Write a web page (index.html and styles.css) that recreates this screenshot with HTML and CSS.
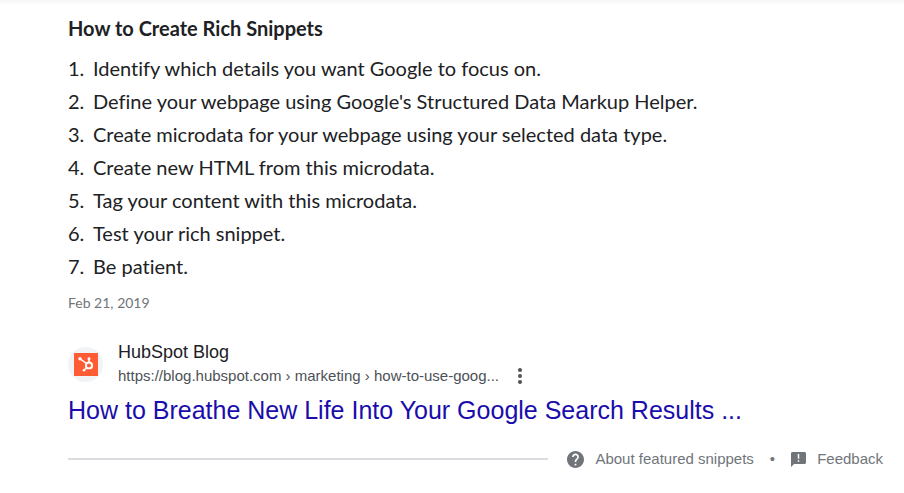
FILE: index.html
```html
<!DOCTYPE html>
<html lang="en">

<head>
    <title>How to Create Rich Snippets</title>
    <meta charset="utf-8">
    <meta name="viewport" content="width=device-width, initial-scale=1.0">
    <link rel="stylesheet" href="styles.css">
</head>

<body>
    <main>
        <section class="snippet">
            <h2>How to Create Rich Snippets</h2>
            <ol>
                <li>Identify which details you want Google to focus on.</li>
                <li>Define your webpage using Google's Structured Data Markup Helper.</li>
                <li>Create microdata for your webpage using your selected data type.</li>
                <li>Create new HTML from this microdata.</li>
                <li>Tag your content with this microdata.</li>
                <li>Test your rich snippet.</li>
                <li>Be patient.</li>
            </ol>
            <p class="date">Feb 21, 2019</p>
        </section>

        <article class="result">
            <div class="source">
                <span class="favicon">
                    <svg viewBox="0 0 24 24" width="24" height="23" preserveAspectRatio="none" aria-hidden="true">
                        <rect width="24" height="24" fill="#ff5c35"/>
                        <g fill="none" stroke="#fff" stroke-width="1.5">
                            <circle cx="15" cy="13" r="3.1" stroke-width="1.9"/>
                            <path d="M15 10V6.500M12.500 11 6 6M12.700 15.200 10.200 17.700"/>
                        </g>
                        <g fill="#fff">
                            <circle cx="15" cy="6" r="1.500"/>
                            <circle cx="6" cy="6" r="1.700"/>
                            <circle cx="10" cy="18" r="1.300"/>
                        </g>
                    </svg>
                </span>
                <div class="site">
                    <div class="name">HubSpot Blog</div>
                    <div class="url">
                        <cite>https://blog.hubspot.com › marketing › how-to-use-goog...</cite>
                        <button type="button" aria-label="About this result">
                            <svg viewBox="0 0 6 18" width="6" height="18" fill="#4d5156">
                                <circle cx="3" cy="3" r="2"/>
                                <circle cx="3" cy="9" r="2"/>
                                <circle cx="3" cy="15" r="2"/>
                            </svg>
                        </button>
                    </div>
                </div>
            </div>
            <h3><a href="#">How to Breathe New Life Into Your Google Search Results ...</a></h3>
        </article>
    </main>

    <footer>
        <hr>
        <a href="#">
            <svg viewBox="2 2 20 20" width="17" height="17" fill="#70757a" aria-hidden="true">
                <path d="M12 2C6.480 2 2 6.480 2 12s4.480 10 10 10 10-4.480 10-10S17.520 2 12 2zm1 17h-2v-2h2v2zm2.070-7.750l-.9.920C13.450 12.900 13 13.500 13 15h-2v-.5c0-1.100.45-2.100 1.170-2.830l1.240-1.260c.37-.36.59-.86.59-1.410 0-1.100-.9-2-2-2s-2 .9-2 2H8c0-2.210 1.790-4 4-4s4 1.790 4 4c0 .88-.36 1.680-.93 2.250z"/>
            </svg>
            About featured snippets
        </a>
        <span class="dot">•</span>
        <a href="#">
            <svg viewBox="2 2 20 20" width="15" height="15" fill="#70757a" aria-hidden="true">
                <path d="M20 2H4c-1.100 0-2 .9-2 2v18l4-4h14c1.100 0 2-.9 2-2V4c0-1.100-.9-2-2-2zm-7 13h-2v-2h2v2zm0-4h-2V4.500h2V11z"/>
            </svg>
            Feedback
        </a>
    </footer>
</body>

</html>
```

FILE: styles.css
```css
body {
    margin: 0;
    background: linear-gradient(#f5f5f5, #fff 5px) no-repeat white;
    color: #202124;
    font-family: "Liberation Sans", Arial, sans-serif;
}

main {
    padding: 12px 20px 0 68px;
}

h2,
h3,
p,
ol {
    margin: 0;
    padding: 0;
}

.snippet {
    font-family: Lato, sans-serif;
    font-size: 20px;
    font-variant-ligatures: none;
}

h2 {
    font-size: 20px;
    line-height: 32px;
    margin-bottom: 8px;
}

ol {
    list-style: none;
    counter-reset: step;
}

li {
    display: flex;
    line-height: 33px;
    counter-increment: step;
}

li::before {
    content: counter(step) ".";
    flex: none;
    width: 25px;
}

.date {
    margin-top: 8px;
    font-size: 14px;
    line-height: 24px;
    color: #70757a;
}

.result {
    margin-top: 25px;
}

.source {
    display: flex;
    align-items: center;
    gap: 15px;
}

.favicon {
    display: flex;
    align-items: center;
    justify-content: center;
    width: 35px;
    height: 35px;
    border-radius: 50%;
    background-color: #f1f3f4;
}

.name {
    font-size: 18px;
    line-height: 24px;
}

.url {
    display: flex;
    align-items: center;
    gap: 18px;
    font-size: 15px;
    line-height: 24px;
    color: #4d5156;
}

cite {
    font-style: normal;
}

button {
    display: flex;
    padding: 0;
    border: none;
    background: none;
}

h3 {
    margin-top: 6px;
    font-size: 25px;
    font-weight: normal;
    line-height: 32px;
}

h3 a {
    color: #1a0dab;
    text-decoration: none;
}

footer {
    display: flex;
    align-items: center;
    margin-top: 21px;
    padding: 0 21px 0 68px;
    font-size: 15px;
    line-height: 24px;
    color: #70757a;
}

footer hr {
    flex: 1;
    height: 2px;
    margin: 0 19px 0 0;
    border: none;
    background-color: #dadce0;
}

footer a {
    display: flex;
    align-items: center;
    gap: 11px;
    color: #70757a;
    text-decoration: none;
}

.dot {
    margin: 0 16px;
}
```
